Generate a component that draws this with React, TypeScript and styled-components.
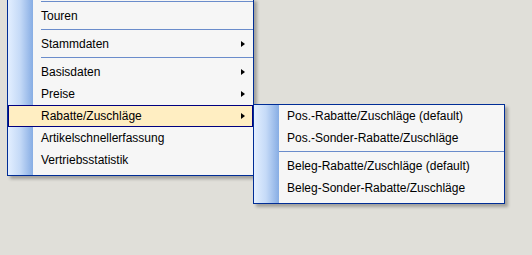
import styled, { createGlobalStyle } from "styled-components";

// #region styles

const GlobalStyle = createGlobalStyle`
  html, body {
    margin: 0;
    padding: 0;
    background: #e0dfd9;
    height: 100%;
    overflow: hidden;
  }
  body {
    font-family: "Liberation Sans", Arial, sans-serif;
    font-size: 12px;
    color: #000;
  }
`;

const Desk = styled.div`
  padding-left: 7px;
`;

const Menu = styled.div<{ $sub?: boolean }>`
  position: ${(p) => (p.$sub ? "absolute" : "relative")};
  top: ${(p) => (p.$sub ? "-1px" : "auto")};
  left: ${(p) => (p.$sub ? "100%" : "auto")};
  width: ${(p) => (p.$sub ? "250px" : "245px")};
  margin-top: ${(p) => (p.$sub ? "0" : "-2px")};
  padding-bottom: 4px;
  border: 1px solid #002d96;
  background: linear-gradient(
        to right,
        #e3efff 0px,
        #c5daf7 12px,
        #87ade4 25px,
        transparent 25px
      )
      no-repeat,
    #f6f6f6;
  box-shadow: 3px 3px 3px rgba(0, 0, 0, 0.28);
  z-index: ${(p) => (p.$sub ? 2 : 1)};
`;

const Item = styled.div<{ $active?: boolean }>`
  position: relative;
  display: flex;
  align-items: center;
  height: 22px;
  padding-left: 33px;
  padding-right: 8px;
  box-sizing: border-box;
  white-space: nowrap;
  background: ${(p) => (p.$active ? "#ffeec2" : "transparent")};
  outline: ${(p) => (p.$active ? "1px solid #000080" : "none")};
  outline-offset: -1px;
`;

const Label = styled.span`
  flex: 1;
`;

const Arrow = styled.span`
  width: 0;
  height: 0;
  border-top: 3.5px solid transparent;
  border-bottom: 3.5px solid transparent;
  border-left: 4px solid #000;
`;

const Separator = styled.div<{ $indent: number }>`
  height: 1px;
  margin: 2px 0 3px ${(p) => p.$indent}px;
  background: #6a8ccb;
`;

// #endregion

type Entry = { label: string; sub?: boolean } | "sep";

const mainEntries: Entry[] = [
  "sep",
  { label: "Touren" },
  "sep",
  { label: "Stammdaten", sub: true },
  "sep",
  { label: "Basisdaten", sub: true },
  { label: "Preise", sub: true },
  { label: "Rabatte/Zuschläge", sub: true },
  { label: "Artikelschnellerfassung" },
  { label: "Vertriebsstatistik" },
];

const subEntries: Entry[] = [
  { label: "Pos.-Rabatte/Zuschläge (default)" },
  { label: "Pos.-Sonder-Rabatte/Zuschläge" },
  "sep",
  { label: "Beleg-Rabatte/Zuschläge (default)" },
  { label: "Beleg-Sonder-Rabatte/Zuschläge" },
];

const activeLabel = "Rabatte/Zuschläge";

export default function App() {
  return (
    <>
      <GlobalStyle />
      <Desk>
        <Menu>
          {mainEntries.map((e, i) =>
            e === "sep" ? (
              <Separator key={i} $indent={33} />
            ) : (
              <Item key={i} $active={e.label === activeLabel}>
                <Label>{e.label}</Label>
                {e.sub && <Arrow />}
                {e.label === activeLabel && (
                  <Menu $sub>
                    {subEntries.map((s, j) =>
                      s === "sep" ? (
                        <Separator key={j} $indent={25} />
                      ) : (
                        <Item key={j}>
                          <Label>{s.label}</Label>
                        </Item>
                      )
                    )}
                  </Menu>
                )}
              </Item>
            )
          )}
        </Menu>
      </Desk>
    </>
  );
}
